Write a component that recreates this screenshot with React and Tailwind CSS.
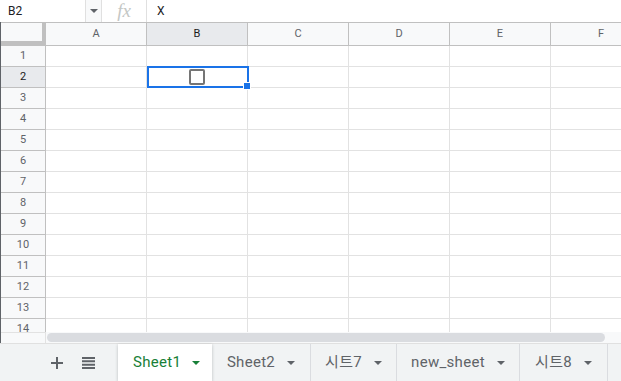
import React from "react";

const COLS = ["A", "B", "C", "D", "E", "F"];
const ROWS = Array.from({ length: 14 }, (_, i) => i + 1);

function Caret({ className }) {
  return (
    <svg width="8" height="4" viewBox="0 0 8 4" className={className}>
      <path d="M0 0 L8 0 L4 4 Z" fill="currentColor" />
    </svg>
  );
}

export default function App() {
  return (
    <div className="w-[621px] h-[381px] overflow-hidden bg-white flex flex-col font-['Roboto',sans-serif] text-[#202124]">
      {/* Formula bar */}
      <div className="h-[22px] flex items-center shrink-0">
        <div className="w-[85px] h-full flex items-center pl-[8px] text-[12px]">B2</div>
        <div className="w-[16px] h-full flex items-center justify-center bg-[#f8f9fa] border-l border-[#e0e0e0] text-[#5f6368]">
          <Caret />
        </div>
        <div className="w-[46px] h-full flex items-center justify-center border-l border-r border-[#e0e0e0]">
          <span className="font-['Liberation_Serif',serif] italic text-[19px] text-[#c4c7c5] leading-[20px]">fx</span>
        </div>
        <div className="pl-[10px] text-[12px]">X</div>
      </div>

      {/* Grid */}
      <div className="flex-1 flex flex-col overflow-hidden border-l border-[#5f6368]">
        {/* Column header */}
        <div className="h-[24px] flex shrink-0">
          <div className="w-[45px] shrink-0 bg-[#f8f9fa] border-t border-[#c0c0c0] border-r-4 border-b-[5px] border-r-[#c0c0c0] border-b-[#c0c0c0]" />
          {COLS.map((c) => (
            <div
              key={c}
              className={`w-[101px] shrink-0 flex items-center justify-center text-[11px] border-t border-r border-b border-[#c0c0c0] ${
                c === "B" ? "bg-[#e8eaed] text-[#1a1a1a]" : "bg-[#f8f9fa] text-[#5f6368]"
              }`}
            >
              {c}
            </div>
          ))}
        </div>

        {/* Rows */}
        <div className="flex-1 overflow-hidden relative">
          {ROWS.map((r) => (
            <div key={r} className="h-[21px] flex">
              <div
                className={`w-[45px] shrink-0 flex items-center justify-center text-[11px] border-r border-b border-[#c0c0c0] ${
                  r === 2 ? "bg-[#e8eaed] text-[#1a1a1a]" : "bg-[#f8f9fa] text-[#5f6368]"
                }`}
              >
                {r}
              </div>
              {COLS.map((c) => (
                <div key={c} className="w-[101px] shrink-0 border-r border-b border-[#e2e2e2] flex items-center justify-center">
                  {r === 2 && c === "B" && (
                    <div className="w-[16px] h-[16px] rounded-[2px] border-2 border-[#757575]" />
                  )}
                </div>
              ))}
            </div>
          ))}

          {/* Selection over B2 */}
          <div className="absolute left-[146px] top-[20px] w-[102px] h-[22px] border-2 border-[#1a73e8]">
            <div className="absolute -right-[4px] -bottom-[4px] w-[6px] h-[6px] bg-[#1a73e8] border border-white box-content" />
          </div>
        </div>

        {/* Horizontal scrollbar */}
        <div className="h-[11px] shrink-0 flex bg-[#f8f9fa]">
          <div className="w-[45px] shrink-0 border-r border-t border-[#e2e2e2]" />
          <div className="flex-1 flex items-center pl-[1px] pr-[16px]">
            <div className="h-[9px] w-full rounded-full bg-[#dadce0]" />
          </div>
        </div>
      </div>

      {/* Tab bar */}
      <div className="h-[38px] shrink-0 flex bg-[#f1f3f4] border-t border-[#e0e0e0]">
        <div className="w-[118px] shrink-0 flex items-center pl-[51px] gap-[19px] text-[#5f6368]">
          <svg width="12" height="12" viewBox="0 0 12 12">
            <path d="M5 0h2v5h5v2H7v5H5V7H0V5h5z" fill="currentColor" />
          </svg>
          <svg width="13" height="12" viewBox="0 0 13 12">
            <path d="M0 0h13v2H0zM0 3.33h13v2H0zM0 6.67h13v2H0zM0 10h13v2H0z" fill="currentColor" />
          </svg>
        </div>
        <div className="w-[94px] shrink-0 bg-white flex items-center pl-[15px] gap-[11px] text-[15px] tracking-[0.3px] text-[#188038] shadow-[0_1px_3px_rgba(60,64,67,0.3)]">
          Sheet1
          <Caret />
        </div>
        {[
          { name: "Sheet2", w: "w-[99px]" },
          { name: "시트7", w: "w-[86px]" },
          { name: "new_sheet", w: "w-[123px]" },
          { name: "시트8", w: "w-[88px]" },
        ].map((t) => (
          <div
            key={t.name}
            className={`${t.w} shrink-0 flex items-center justify-center gap-[12px] text-[15px] tracking-[0.3px] text-[#5f6368] border-r border-[#dadce0] font-['Roboto','Noto_Sans_CJK_KR',sans-serif]`}
          >
            {t.name}
            <Caret />
          </div>
        ))}
      </div>
    </div>
  );
}
